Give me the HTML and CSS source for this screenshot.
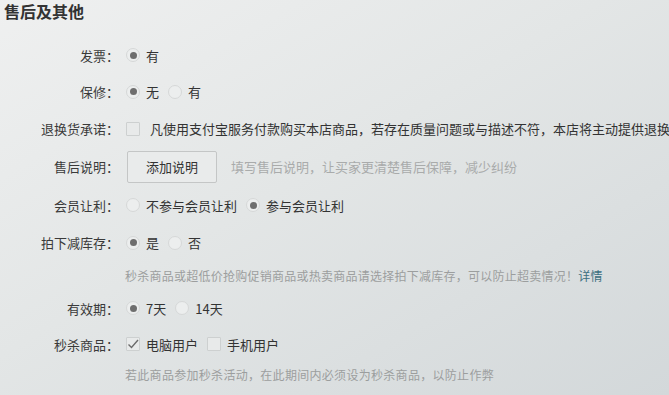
FILE: index.html
```html
<!DOCTYPE html>
<html lang="zh-CN">
<head>
<meta charset="utf-8">
<title>售后及其他</title>
<link rel="stylesheet" href="styles.css">
</head>
<body>
<div class="page">
  <h2 class="title">售后及其他</h2>
  <div class="form">
    <div class="row r1">
      <div class="label">发票：</div>
      <div class="ctrl">
        <span class="radio on"></span><span class="opt">有</span>
      </div>
    </div>
    <div class="row r2">
      <div class="label">保修：</div>
      <div class="ctrl">
        <span class="radio on"></span><span class="opt">无</span>
        <span class="radio"></span><span class="opt">有</span>
      </div>
    </div>
    <div class="row r3">
      <div class="label">退换货承诺：</div>
      <div class="ctrl">
        <span class="check"></span><span class="opt wide">凡使用支付宝服务付款购买本店商品，若存在质量问题或与描述不符，本店将主动提供退换</span>
      </div>
    </div>
    <div class="row r4">
      <div class="label">售后说明：</div>
      <div class="ctrl">
        <button class="btn" type="button">添加说明</button>
        <span class="note">填写售后说明，让买家更清楚售后保障，减少纠纷</span>
      </div>
    </div>
    <div class="row r5">
      <div class="label">会员让利：</div>
      <div class="ctrl">
        <span class="radio"></span><span class="opt">不参与会员让利</span>
        <span class="radio on"></span><span class="opt">参与会员让利</span>
      </div>
    </div>
    <div class="row r6">
      <div class="label">拍下减库存：</div>
      <div class="ctrl">
        <span class="radio on"></span><span class="opt">是</span>
        <span class="radio"></span><span class="opt">否</span>
      </div>
    </div>
    <div class="hint h1">秒杀商品或超低价抢购促销商品或热卖商品请选择拍下减库存，可以防止超卖情况！<a class="link" href="#">详情</a></div>
    <div class="row r7">
      <div class="label">有效期：</div>
      <div class="ctrl">
        <span class="radio on"></span><span class="opt">7天</span>
        <span class="radio"></span><span class="opt">14天</span>
      </div>
    </div>
    <div class="row r8">
      <div class="label">秒杀商品：</div>
      <div class="ctrl">
        <span class="check on"><svg viewBox="0 0 14 14" width="14" height="14"><polyline points="2.5,7.5 5.5,10.5 12,3" fill="none" stroke="#6b6b6b" stroke-width="1.4"/></svg></span><span class="opt">电脑用户</span>
        <span class="check"></span><span class="opt">手机用户</span>
      </div>
    </div>
    <div class="hint h2">若此商品参加秒杀活动，在此期间内必须设为秒杀商品，以防止作弊</div>
  </div>
</div>
</body>
</html>
```
FILE: styles.css
```css
html, body {
  margin: 0;
  padding: 0;
}
body {
  width: 669px;
  height: 395px;
  overflow: hidden;
  background: linear-gradient(to bottom right, #eff0f0 0%, #e3e6e6 45%, #d3d8da 100%);
  font-family: "Noto Sans CJK SC", "Microsoft YaHei", sans-serif;
  font-size: 13px;
  color: #383838;
}
.page {
  width: 669px;
  height: 395px;
  overflow: hidden;
}
.title {
  margin: 0;
  padding-left: 4px;
  font-size: 16px;
  line-height: 22px;
  font-weight: bold;
  color: #333;
}
.form {
  margin-top: 15px;
}
.row {
  display: flex;
  align-items: center;
  white-space: nowrap;
}
.r1 { height: 36px; }
.r2 { height: 37px; }
.r3 { height: 37px; }
.r4 { height: 39px; }
.r5 { height: 38px; }
.r6 { height: 37px; }
.r7 { height: 36px; }
.r8 { height: 36px; }
.label {
  flex: none;
  width: 119px;
  text-align: right;
  color: #3a3a3a;
}
.ctrl {
  display: flex;
  align-items: center;
  margin-left: 7px;
}
.radio {
  flex: none;
  width: 14px;
  height: 14px;
  box-sizing: border-box;
  border: 1px solid #d6d8d8;
  border-radius: 50%;
  background: #eceeee;
  display: flex;
  align-items: center;
  justify-content: center;
}
.radio.on::after {
  content: "";
  width: 7px;
  height: 7px;
  border-radius: 50%;
  background: #6e6e6e;
}
.opt {
  margin-left: 6px;
  margin-right: 9px;
  color: #333;
}
.opt.wide {
  margin-left: 10px;
  margin-right: 0;
}
.check {
  flex: none;
  width: 14px;
  height: 14px;
  box-sizing: border-box;
  border: 1px solid #cdd0d0;
  border-radius: 1px;
  background: #e8eaea;
  display: flex;
  align-items: center;
  justify-content: center;
}
.check svg {
  display: block;
  margin: -1px;
}
.btn {
  flex: none;
  width: 90px;
  height: 32px;
  box-sizing: border-box;
  border: 1px solid #c4c6c6;
  border-radius: 2px;
  background: #e9ebeb;
  font-family: inherit;
  font-size: 13px;
  color: #333;
  padding: 0;
  margin-left: 1px;
}
.note {
  margin-left: 14px;
  color: #a9abab;
}
.hint {
  padding-left: 125px;
  font-size: 12px;
  color: #9c9e9e;
  white-space: nowrap;
  display: flex;
  align-items: center;
}
.h1 { height: 29px; letter-spacing: 0.25px; }
.h2 { height: 24px; letter-spacing: 0.3px; }
.link {
  color: #3c6f80;
  text-decoration: none;
}
```
